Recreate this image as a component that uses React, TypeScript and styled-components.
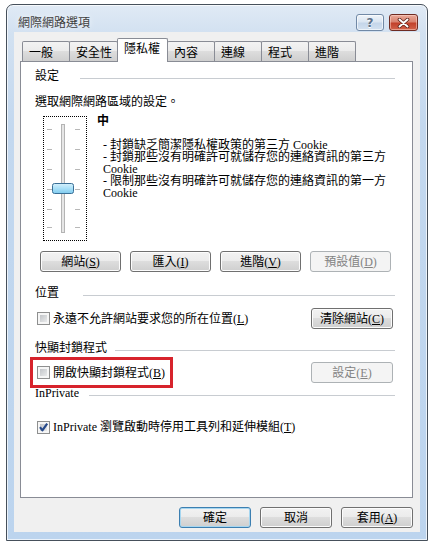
import React from "react";
import styled, { createGlobalStyle, css } from "styled-components";

const GlobalStyle = createGlobalStyle`
  body {
    margin: 0;
    background: #ffffff;
    font-family: "Liberation Serif", "Noto Sans CJK TC", serif;
    font-size: 12px;
    color: #000;
  }
`;

const CJK = `"Noto Sans CJK TC", "Noto Sans", sans-serif`;

const Page = styled.div`
  padding: 4px 0 0 6px;
`;

const Window = styled.div`
  width: 422px;
  height: 537px;
  box-sizing: border-box;
  border: 1px solid #46505b;
  border-radius: 7px 7px 0 0;
  background: linear-gradient(180deg, #e0eaf5 0px, #d2e1f1 28px, #c3d8ef 120px, #bcd4ee 100%);
  box-shadow: inset 0 0 0 1px rgba(255, 255, 255, 0.7);
  display: flex;
  flex-direction: column;
`;

const TitleBar = styled.div`
  height: 27px;
  box-sizing: border-box;
  padding: 9px 9px 0 11px;
  display: flex;
  align-items: flex-start;
`;

const Title = styled.div`
  font-family: ${CJK};
  font-size: 12px;
  line-height: 16px;
  color: #3f3f3f;
  text-shadow: 0 0 6px rgba(255, 255, 255, 0.9);
`;

const CaptionButtons = styled.div`
  margin-left: auto;
  display: flex;
  gap: 5px;
`;

const CaptionButton = styled.div<{ $variant: "help" | "close" }>`
  width: ${(p) => (p.$variant === "close" ? 29 : 28)}px;
  height: 17px;
  box-sizing: border-box;
  border-radius: 3px;
  display: flex;
  align-items: center;
  justify-content: center;
  ${(p) =>
    p.$variant === "close"
      ? css`
          border: 1px solid #6e2b22;
          background: linear-gradient(180deg, #e9a99a 0%, #d98370 45%, #c2412b 55%, #d2634b 100%);
          box-shadow: inset 0 0 0 1px rgba(255, 220, 210, 0.5);
        `
      : css`
          border: 1px solid #7189a6;
          background: linear-gradient(180deg, #eef3f9 0%, #dbe6f2 45%, #c5d6ea 55%, #d3e1f0 100%);
          box-shadow: inset 0 0 0 1px rgba(255, 255, 255, 0.6);
        `}
`;

const HelpGlyph = styled.span`
  font-family: "DejaVu Sans", sans-serif;
  font-weight: bold;
  font-size: 12px;
  line-height: 12px;
  color: #5c7088;
  text-shadow: 0 1px 0 #fff;
`;

const Client = styled.div`
  flex: 1;
  margin: 0 7px 8px 7px;
  background: #f0f0f0;
  padding: 6px 7px 0 6px;
  display: flex;
  flex-direction: column;
`;

const TabStrip = styled.div`
  height: 24px;
  display: flex;
  align-items: flex-end;
  padding-left: 2px;
  margin-bottom: -1px;
  position: relative;
  z-index: 1;
`;

const Tab = styled.div<{ $active?: boolean }>`
  font-family: ${CJK};
  font-size: 12px;
  line-height: 16px;
  box-sizing: border-box;
  min-width: 48px;
  margin-right: -1px;
  border: 1px solid #898c95;
  border-bottom: none;
  border-radius: 2px 2px 0 0;
  display: flex;
  ${(p) =>
    p.$active
      ? css`
          height: 24px;
          padding: 1px 7px 0 6px;
          align-items: flex-start;
          background: #ffffff;
          position: relative;
          z-index: 2;
        `
      : css`
          height: 20px;
          margin-bottom: 1px;
          padding: 0 5px 0 6px;
          align-items: center;
          background: linear-gradient(180deg, #f3f3f3 0%, #ebebeb 50%, #dddddd 50%, #cfcfcf 100%);
        `}
`;

const Panel = styled.div`
  height: 437px;
  box-sizing: border-box;
  background: #ffffff;
  border: 1px solid #898c95;
  padding: 6px 19px 0 14px;
  display: flex;
  flex-direction: column;
`;

const GroupHeader = styled.div<{ $top: number }>`
  display: flex;
  align-items: center;
  margin-top: ${(p) => p.$top}px;
  margin-right: -2px;
`;

const GroupLabel = styled.span`
  font-family: "Liberation Serif", ${CJK};
  font-size: 12px;
  line-height: 16px;
  white-space: nowrap;
`;

const Rule = styled.div<{ $gap: number }>`
  flex: 1;
  margin-left: ${(p) => p.$gap}px;
  margin-top: 4px;
  border-top: 1px solid #c8ccd1;
`;

const Text = styled.div<{ $top?: number }>`
  font-family: ${CJK};
  font-size: 12px;
  line-height: 16px;
  margin-top: ${(p) => p.$top ?? 0}px;
`;

const PrivacyRow = styled.div`
  display: flex;
  align-items: flex-start;
  margin-top: 3px;
  padding-left: 8px;
`;

const SliderBox = styled.div`
  width: 44px;
  height: 125px;
  box-sizing: border-box;
  margin-top: 4px;
  border: 1px dotted #000;
`;

const LevelText = styled.div`
  margin-left: 10px;
  display: flex;
  flex-direction: column;
`;

const Level = styled.div`
  font-family: ${CJK};
  font-weight: bold;
  font-size: 12px;
  line-height: 16px;
`;

const Bullets = styled.div`
  margin-top: 11px;
  padding-left: 6px;
  font-family: "Liberation Serif", ${CJK};
  font-size: 12px;
  line-height: 12px;
  white-space: nowrap;
`;

const ButtonRow = styled.div`
  display: flex;
  gap: 9px;
  margin-top: 10px;
  padding-left: 5px;
`;

const Button = styled.button<{ $width: number; $default?: boolean }>`
  width: ${(p) => p.$width}px;
  height: 21px;
  box-sizing: border-box;
  padding: 0;
  margin: 0;
  border-radius: 3px;
  font-family: "Liberation Serif", ${CJK};
  font-size: 12px;
  line-height: 16px;
  color: #000;
  display: flex;
  align-items: center;
  justify-content: center;
  border: 1px solid ${(p) => (p.$default ? "#3c7fb1" : "#707070")};
  background: linear-gradient(180deg, #f2f2f2 0%, #ebebeb 50%, #dddddd 50%, #cfcfcf 100%);
  box-shadow: inset 0 0 0 1px ${(p) => (p.$default ? "#a6d6f0" : "#fcfcfc")};

  &:disabled {
    border-color: #adb2b5;
    background: #f4f4f4;
    color: #838383;
    box-shadow: none;
  }
`;

const OptionRow = styled.div<{ $top: number }>`
  display: flex;
  align-items: center;
  justify-content: space-between;
  margin-top: ${(p) => p.$top}px;
`;

const CheckLabel = styled.label<{ $highlight?: boolean }>`
  display: flex;
  align-items: center;
  gap: 3px;
  margin-left: 2px;
  font-family: "Liberation Serif", ${CJK};
  font-size: 12px;
  line-height: 16px;
  position: relative;
  ${(p) =>
    p.$highlight &&
    css`
      &::after {
        content: "";
        position: absolute;
        top: -8px;
        bottom: -7px;
        left: -7px;
        right: -8px;
        border: 3px solid #d7232c;
      }
    `}
`;

const CheckBox = styled.span`
  width: 13px;
  height: 13px;
  box-sizing: border-box;
  flex: none;
  position: relative;
  border: 1px solid #8e8f8f;
  padding: 2px;
  background: linear-gradient(135deg, #c2c5c9 0%, #e9eaeb 100%) content-box, #f6f6f6;

  svg {
    position: absolute;
    left: -1px;
    top: -1px;
  }
`;

const Footer = styled.div`
  display: flex;
  justify-content: flex-end;
  gap: 9px;
  margin-top: 9px;
`;

const Check = ({ checked }: { checked?: boolean }) => (
  <CheckBox>
    {checked && (
      <svg width="13" height="13" viewBox="0 0 13 13">
        <path d="M3 6.2 L5.4 9.3 L10.2 2.6" fill="none" stroke="#26498a" strokeWidth="2.2" strokeLinejoin="round" />
      </svg>
    )}
  </CheckBox>
);

const Slider = () => {
  const ticks = [12, 32, 52, 72, 92, 110];
  return (
    <SliderBox>
      <svg width="42" height="123" viewBox="0 0 42 123">
        <rect x="17.5" y="7.5" width="3" height="108" fill="#e6e6e6" stroke="#b4b4b4" />
        {ticks.map((y) => (
          <g key={y} stroke="#b8b8b8">
            <line x1="3" x2="8" y1={y + 0.5} y2={y + 0.5} />
            <line x1="31" x2="36" y1={y + 0.5} y2={y + 0.5} />
          </g>
        ))}
        <defs>
          <linearGradient id="thumb" x1="0" y1="0" x2="0" y2="1">
            <stop offset="0" stopColor="#d6f1fc" />
            <stop offset="0.5" stopColor="#a9e0f8" />
            <stop offset="1" stopColor="#7fcbef" />
          </linearGradient>
        </defs>
        <rect x="8.5" y="66.5" width="21" height="10" rx="2" fill="url(#thumb)" stroke="#3a6f96" />
      </svg>
    </SliderBox>
  );
};

const CloseIcon = () => (
  <svg width="13" height="10" viewBox="0 0 13 10">
    <path d="M2.5 1.5 L10.5 8.5 M10.5 1.5 L2.5 8.5" stroke="#5a1e16" strokeWidth="3.6" strokeLinecap="round" />
    <path d="M2.5 1.5 L10.5 8.5 M10.5 1.5 L2.5 8.5" stroke="#ffffff" strokeWidth="2" strokeLinecap="round" />
  </svg>
);

const tabs = ["一般", "安全性", "隱私權", "內容", "連線", "程式", "進階"];

export default function App() {
  return (
    <Page>
      <GlobalStyle />
      <Window>
        <TitleBar>
          <Title>網際網路選項</Title>
          <CaptionButtons>
            <CaptionButton $variant="help">
              <HelpGlyph>?</HelpGlyph>
            </CaptionButton>
            <CaptionButton $variant="close">
              <CloseIcon />
            </CaptionButton>
          </CaptionButtons>
        </TitleBar>
        <Client>
          <TabStrip>
            {tabs.map((t) => (
              <Tab key={t} $active={t === "隱私權"}>
                {t}
              </Tab>
            ))}
          </TabStrip>
          <Panel>
            <GroupHeader $top={0}>
              <GroupLabel>設定</GroupLabel>
              <Rule $gap={21} />
            </GroupHeader>
            <Text $top={9}>選取網際網路區域的設定。</Text>
            <PrivacyRow>
              <Slider />
              <LevelText>
                <Level>中</Level>
                <Bullets>
                  <div>- 封鎖缺乏簡潔隱私權政策的第三方 Cookie</div>
                  <div>- 封鎖那些沒有明確許可就儲存您的連絡資訊的第三方</div>
                  <div>Cookie</div>
                  <div>- 限制那些沒有明確許可就儲存您的連絡資訊的第一方</div>
                  <div>Cookie</div>
                </Bullets>
              </LevelText>
            </PrivacyRow>
            <ButtonRow>
              <Button $width={81}>
                網站(<u>S</u>)
              </Button>
              <Button $width={81}>
                匯入(<u>I</u>)
              </Button>
              <Button $width={81}>
                進階(<u>V</u>)
              </Button>
              <Button $width={81} disabled>
                預設值(<u>D</u>)
              </Button>
            </ButtonRow>

            <GroupHeader $top={13}>
              <GroupLabel>位置</GroupLabel>
              <Rule $gap={24} />
            </GroupHeader>
            <OptionRow $top={7}>
              <CheckLabel>
                <Check />
                <span>
                  永遠不允許網站要求您的所在位置(<u>L</u>)
                </span>
              </CheckLabel>
              <Button $width={82}>
                清除網站(<u>C</u>)
              </Button>
            </OptionRow>

            <GroupHeader $top={11}>
              <GroupLabel>快顯封鎖程式</GroupLabel>
              <Rule $gap={8} />
            </GroupHeader>
            <OptionRow $top={6}>
              <CheckLabel $highlight>
                <Check />
                <span>
                  開啟快顯封鎖程式(<u>B</u>)
                </span>
              </CheckLabel>
              <Button $width={82} disabled>
                設定(<u>E</u>)
              </Button>
            </OptionRow>

            <GroupHeader $top={2}>
              <GroupLabel>InPrivate</GroupLabel>
              <Rule $gap={10} />
            </GroupHeader>
            <OptionRow $top={18}>
              <CheckLabel>
                <Check checked />
                <span>
                  InPrivate 瀏覽啟動時停用工具列和延伸模組(<u>T</u>)
                </span>
              </CheckLabel>
            </OptionRow>
          </Panel>
          <Footer>
            <Button $width={72} $default>
              確定
            </Button>
            <Button $width={72}>取消</Button>
            <Button $width={72}>
              套用(<u>A</u>)
            </Button>
          </Footer>
        </Client>
      </Window>
    </Page>
  );
}
